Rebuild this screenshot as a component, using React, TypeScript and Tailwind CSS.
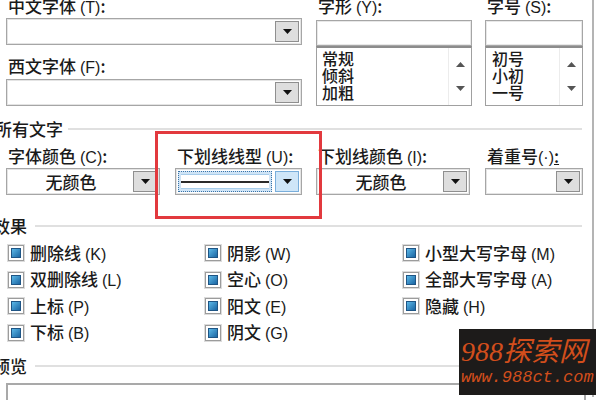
import type { ReactNode } from 'react';

const Tri = ({ up = false, color = '#111' }: { up?: boolean; color?: string }) => (
  <svg width="9" height="5" viewBox="0 0 9 5">
    <path d={up ? 'M0 5h9L4.5 0z' : 'M0 0h9L4.5 5z'} fill={color} />
  </svg>
);

const Hot = ({ k }: { k: string }) => (
  <span className="ml-[4px] font-['Liberation_Sans',sans-serif] text-[16px]">({k})</span>
);

function Label({ children }: { children: ReactNode }) {
  return <div className="h-[17px] pl-[2px] whitespace-nowrap">{children}</div>;
}

function Combo({ className, text, focused }: { className: string; text?: string; focused?: boolean }) {
  return (
    <div className={`${className} h-[27px] flex border border-[#a6a6a6] bg-white p-[2px] shadow-[inset_0_0_0_1px_#e4e4e4]`}>
      {focused ? (
        <div className="flex-1 mr-[3px] border border-dotted border-[#3a73a6] bg-[#cfe4f6] p-[2px] flex">
          <div className="flex-1 bg-white border-y border-[#a8cdea] flex items-center">
            <div className="h-[2px] w-full bg-[#2a2a2a]" />
          </div>
        </div>
      ) : (
        <div className="flex-1 flex items-center justify-center">{text}</div>
      )}
      <div
        className={`w-[24px] flex items-center justify-center border ${
          focused ? 'border-[#79aedb] bg-[#cfe6f8]' : 'border-[#8f8f8f] bg-[#dedede]'
        }`}
      >
        <Tri />
      </div>
    </div>
  );
}

function ListBox({ items, textPad }: { items: string[]; textPad: string }) {
  return (
    <div className="h-[60px] flex border border-[#a0a0a0] border-t-2 border-t-[#8c8c8c] bg-white">
      <div className={`flex-1 ${textPad} pt-[2px] text-[16px] leading-[17px] overflow-hidden`}>
        {items.map((t) => (
          <div key={t}>{t}</div>
        ))}
      </div>
      <div className="w-[23px] flex flex-col items-center justify-between pt-[14px] pb-[14px] border-l border-[#ececec]">
        <Tri up color="#555" />
        <Tri color="#555" />
      </div>
    </div>
  );
}

function Section({ title, lineGap }: { title: string; lineGap: string }) {
  return (
    <div className="flex items-center h-[17px]">
      <span className={`whitespace-nowrap ${lineGap}`}>{title}</span>
      <div className="flex-1 h-[2px] bg-[#e0e0e0] mr-[10px]" />
    </div>
  );
}

function Check({ label, k }: { label: string; k: string }) {
  return (
    <div className="h-[26.5px] flex items-center">
      <span className="w-[16px] h-[16px] border border-[#9c9c9c] bg-white p-[2px] shadow-[0_0_0_1px_#dcdcdc]">
        <span className="block w-full h-full border border-[#1f5585] bg-linear-to-br from-[#5cb9e8] to-[#1a66a3]" />
      </span>
      <span className="ml-[6px] whitespace-nowrap">
        {label}
        <Hot k={k} />
      </span>
    </div>
  );
}

export default function App() {
  return (
    <div className="w-[600px] h-[400px] overflow-hidden bg-white relative text-[17px] leading-[17px] font-medium text-[#1a1a1a] font-['Noto_Sans_CJK_SC',sans-serif]">
      <div className="w-[594px] h-full border-r-2 border-[#b4b4b4]">
        {/* font pickers */}
        <div className="flex -mt-[3px]">
          <div className="ml-[6px] w-[296px] flex flex-col">
            <Label>
              中文字体<Hot k="T" />:
            </Label>
            <Combo className="w-full mt-[4px]" />
            <Label>
              <span className="block mt-[12px]">
                西文字体<Hot k="F" />:
              </span>
            </Label>
            <Combo className="w-full mt-[17px]" />
          </div>
          <div className="ml-[14px] w-[156px] flex flex-col">
            <Label>
              字形<Hot k="Y" />:
            </Label>
            <div className="mt-[6px] h-[26px] border border-[#a6a6a6] bg-white shadow-[inset_0_0_0_1px_#e8e8e8]" />
            <ListBox items={['常规', '倾斜', '加粗']} textPad="pl-[5px]" />
          </div>
          <div className="ml-[13px] w-[98px] flex flex-col">
            <Label>
              字号<Hot k="S" />:
            </Label>
            <div className="mt-[6px] h-[26px] border border-[#a6a6a6] bg-white shadow-[inset_0_0_0_1px_#e8e8e8]" />
            <ListBox items={['初号', '小初', '一号']} textPad="pl-[6px]" />
          </div>
        </div>

        {/* all text */}
        <div className="mt-[14px] -ml-[5px]">
          <Section title="所有文字" lineGap="mr-[5px]" />
        </div>
        <div className="flex mt-[10px]">
          <div className="ml-[6px] w-[154px]">
            <Label>
              字体颜色<Hot k="C" />:
            </Label>
            <Combo className="w-full mt-[4px]" text="无颜色" />
          </div>
          <div className="ml-[15px] w-[127px]">
            <Label>
              下划线线型<Hot k="U" />:
            </Label>
            <Combo className="w-full mt-[4px]" focused />
          </div>
          <div className="ml-[14px] w-[154px]">
            <Label>
              下划线颜色<Hot k="I" />:
            </Label>
            <Combo className="w-full mt-[4px]" text="无颜色" />
          </div>
          <div className="ml-[15px] w-[98px]">
            <Label>
              着重号<span className="font-['Liberation_Sans',sans-serif] text-[16px]">(·)</span>
              <span className="underline">:</span>
            </Label>
            <Combo className="w-full mt-[4px]" />
          </div>
        </div>

        {/* effects */}
        <div className="mt-[22px] -ml-[7px]">
          <Section title="效果" lineGap="mr-[8px]" />
        </div>
        <div className="mt-[6px] ml-[8px] grid grid-cols-[197px_198px_1fr]">
          <div>
            <Check label="删除线" k="K" />
            <Check label="双删除线" k="L" />
            <Check label="上标" k="P" />
            <Check label="下标" k="B" />
          </div>
          <div>
            <Check label="阴影" k="W" />
            <Check label="空心" k="O" />
            <Check label="阳文" k="E" />
            <Check label="阴文" k="G" />
          </div>
          <div>
            <Check label="小型大写字母" k="M" />
            <Check label="全部大写字母" k="A" />
            <Check label="隐藏" k="H" />
          </div>
        </div>

        {/* preview */}
        <div className="mt-[11px] -ml-[7px]">
          <Section title="预览" lineGap="mr-[8px]" />
        </div>
        <div className="mt-[9px] ml-[6px] mr-[6px] h-[40px] border-2 border-[#a9a9a9]" />
      </div>

      {/* annotation */}
      <div className="absolute left-[155px] top-[131px] w-[167px] h-[88px] border-[3px] border-[#e2393e]" />

      {/* watermark */}
      <div className="absolute left-[459px] top-[329px] w-[137px] h-[66px] bg-[#1d1b1a] text-[#d24e1c] italic font-normal overflow-hidden">
        <div className="mt-[8px] ml-[2px] text-[28px] leading-[29px] font-['Liberation_Serif','Noto_Sans_CJK_SC',serif] whitespace-nowrap">
          988探索网
        </div>
        <div className="mt-[3px] ml-[2px] text-[17px] leading-[17px] font-['Liberation_Mono',monospace] whitespace-nowrap">
          www.988ct.com
        </div>
      </div>
    </div>
  );
}
